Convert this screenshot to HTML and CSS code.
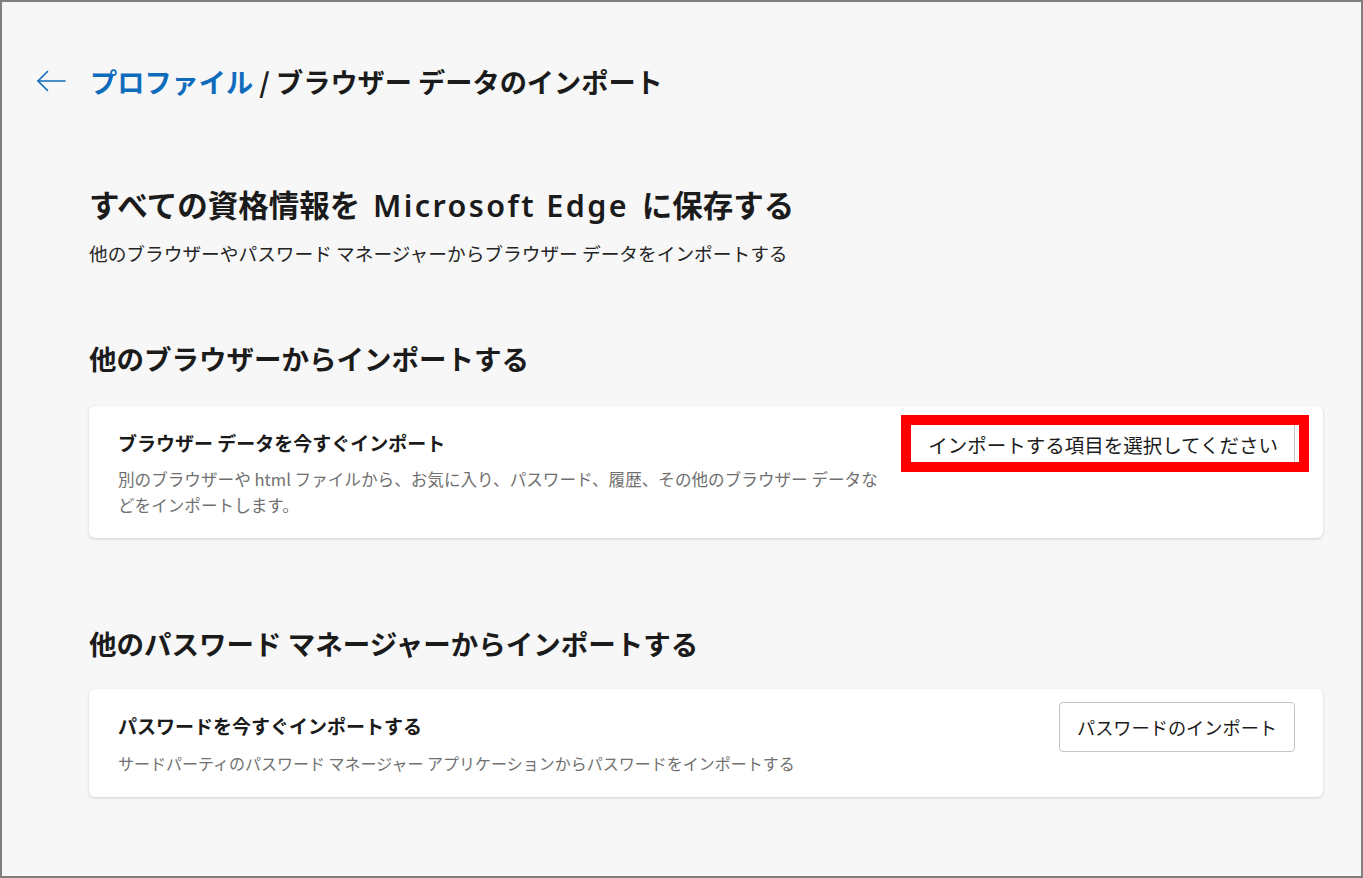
FILE: index.html
```html
<!DOCTYPE html>
<html lang="ja">
<head>
<meta charset="utf-8">
<title>ブラウザー データのインポート</title>
<link rel="stylesheet" href="styles.css">
</head>
<body>
<div class="frame">
  <header class="crumbs">
    <span class="back" aria-label="戻る">
      <svg width="30" height="22" viewBox="0 0 30 22" fill="none" stroke="#0f6cbd" stroke-width="1.6" stroke-linecap="round" stroke-linejoin="round">
        <path d="M29 11H2"/>
        <path d="M11.5 1.5L2 11l9.5 9.5"/>
      </svg>
    </span>
    <h1 class="crumb-title"><a class="crumb-link" href="#">プロファイル</a> / ブラウザー データのインポート</h1>
  </header>

  <main class="content">
    <h2 class="page-heading">すべての資格情報を <span class="latin wide">Microsoft Edge</span> に保存する</h2>
    <p class="page-sub">他のブラウザーやパスワード マネージャーからブラウザー データをインポートする</p>

    <h2 class="section-heading first">他のブラウザーからインポートする</h2>
    <section class="card card-browser">
      <div class="card-text">
        <div class="card-title">ブラウザー データを今すぐインポート</div>
        <div class="card-desc desc-wide">別のブラウザーや html ファイルから、お気に入り、パスワード、履歴、その他のブラウザー データなどをインポートします。</div>
      </div>
      <div class="btn-wrap">
        <button class="btn btn-select">インポートする項目を選択してください</button>
        <span class="highlight"></span>
      </div>
    </section>

    <h2 class="section-heading second">他のパスワード マネージャーからインポートする</h2>
    <section class="card card-pass">
      <div class="card-text">
        <div class="card-title">パスワードを今すぐインポートする</div>
        <div class="card-desc">サードパーティのパスワード マネージャー アプリケーションからパスワードをインポートする</div>
      </div>
      <div class="btn-wrap">
        <button class="btn btn-pass">パスワードのインポート</button>
      </div>
    </section>
  </main>
</div>
</body>
</html>
```

FILE: styles.css
```css
html, body {
  margin: 0;
  padding: 0;
}

body {
  font-family: "Noto Sans CJK JP", "Noto Sans", sans-serif;
  color: #1b1b1b;
  background: #f7f7f7;
}

.latin {
  font-family: "Noto Sans", "Noto Sans CJK JP", sans-serif;
  line-height: 1;
}

.latin.wide {
  letter-spacing: 2.4px;
  margin: 0 6px;
}

.frame {
  box-sizing: border-box;
  width: 1363px;
  height: 878px;
  border: 2px solid #7f7f7f;
  background: #f7f7f7;
  overflow: hidden;
}

.crumbs {
  display: flex;
  align-items: center;
  height: 36px;
  margin-top: 61px;
  padding-left: 34px;
}

.back {
  display: flex;
  width: 30px;
  height: 22px;
  margin-right: 24px;
}

.crumb-title {
  margin: 0;
  font-size: 27.2px;
  line-height: 36px;
  font-weight: 600;
  color: #1b1b1b;
  white-space: nowrap;
}

.crumb-link {
  color: #0f6cbd;
  text-decoration: none;
}

.content {
  width: 1234px;
  padding-left: 87px;
}

.page-heading {
  height: 36px;
  margin: 87px 0 0;
  font-size: 30.5px;
  line-height: 36px;
  font-weight: 600;
  white-space: nowrap;
}

.page-sub {
  margin: 18px 0 0;
  font-size: 18.7px;
  line-height: 26px;
  color: #242424;
  white-space: nowrap;
}

.section-heading {
  margin: 0;
  font-size: 27.5px;
  line-height: 36px;
  font-weight: 600;
  white-space: nowrap;
}

.section-heading.first {
  margin-top: 74px;
}

.section-heading.second {
  margin-top: 87px;
}

.card {
  display: flex;
  justify-content: space-between;
  align-items: flex-start;
  background: #ffffff;
  border-radius: 6px;
  box-shadow: 0 1px 3px rgba(0, 0, 0, 0.16), 0 0 1px rgba(0, 0, 0, 0.06);
  padding: 24px 28px 20px 29px;
}

.card-browser {
  margin-top: 30px;
}

.card-pass {
  margin-top: 28px;
  padding-bottom: 21px;
}

.card-title {
  font-size: 19px;
  line-height: 26px;
  font-weight: 600;
  color: #1b1b1b;
  white-space: nowrap;
}

.card-desc {
  margin-top: 10px;
  font-size: 16px;
  line-height: 26px;
  color: #707070;
}

.card-pass .card-desc {
  margin-top: 11px;
  white-space: nowrap;
}

.desc-wide {
  width: 775px;
  font-size: 16.6px;
}

.btn-wrap {
  position: relative;
  margin-top: -11px;
}

.btn {
  display: block;
  box-sizing: border-box;
  height: 50px;
  background: #ffffff;
  border: 1px solid #c4c4c4;
  border-radius: 4px;
  font-family: "Noto Sans CJK JP", "Noto Sans", sans-serif;
  color: #1b1b1b;
  white-space: nowrap;
  cursor: pointer;
}

.btn-select {
  font-size: 19.5px;
  padding: 0 16px 0 17px;
}

.btn-pass {
  width: 236px;
  font-size: 18.2px;
  padding: 0;
}

.highlight {
  position: absolute;
  top: -4px;
  bottom: -3px;
  left: -9px;
  right: -14px;
  border: 10px solid #ff0000;
  pointer-events: none;
}
```
